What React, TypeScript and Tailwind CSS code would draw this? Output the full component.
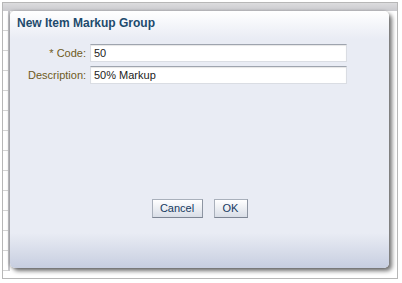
const rows = Array.from({ length: 13 });

export default function App() {
  return (
    <div
      className="w-[402px] h-[283px] bg-white pt-[2px] pl-[2px]"
      style={{ fontFamily: '"Liberation Sans", Arial, sans-serif' }}
    >
      <div className="relative w-[396px] h-[277px] border border-[#b7b7b7] bg-white overflow-hidden">
        {/* page behind the popup */}
        <div className="h-[8px] bg-gradient-to-b from-[#dcdcde] to-[#cacace]" />
        <div className="w-[7px] border-r-[2px] border-[#c8c8cc]">
          {rows.map((_, i) => (
            <div key={i} className="h-[20px] border-b border-[#d4d4d4]" />
          ))}
        </div>

        {/* popup dialog */}
        <div className="absolute left-[7px] top-[8px] w-[379px] h-[257px] rounded-[5px] bg-[linear-gradient(to_bottom,#ffffff_0px,#e9ecf4_28px,#e9ecf4_222px,#c7cee0_257px)] shadow-[3px_3px_4px_rgba(0,0,0,0.55),-1px_0_3px_rgba(0,0,0,0.25)]">
          <div className="pl-[7px] pt-[4px] text-[12px] leading-[16px] font-bold text-[#1d4a6c]">
            New Item Markup Group
          </div>

          <div className="mt-[13px] ml-[18px] grid grid-cols-[58px_257px] gap-x-[4px] gap-y-[4px] text-[11px] leading-[18px]">
            <label className="text-right text-[#6f5b1c] whitespace-nowrap">* Code:</label>
            <div className="h-[18px] bg-white border border-[#dadde3] border-t-[#9ea4ae] shadow-[inset_0_1px_1px_rgba(0,0,0,0.1)] pl-[3px] leading-[16px] text-[#222]">
              50
            </div>
            <label className="text-right text-[#6f5b1c] whitespace-nowrap">Description:</label>
            <div className="h-[18px] bg-white border border-[#dadde3] border-t-[#9ea4ae] shadow-[inset_0_1px_1px_rgba(0,0,0,0.1)] pl-[3px] leading-[16px] text-[#222]">
              50% Markup
            </div>
          </div>

          <div className="mt-[115px] flex justify-center gap-[11px] text-[11px] text-[#163a5f]">
            <button className="w-[51px] h-[19px] border border-[#a9b0bb] border-b-[#7d8593] border-r-[#8d95a2] bg-gradient-to-b from-white to-[#d9dee7] leading-[17px]">
              Cancel
            </button>
            <button className="w-[34px] h-[19px] border border-[#a9b0bb] border-b-[#7d8593] border-r-[#8d95a2] bg-gradient-to-b from-white to-[#d9dee7] leading-[17px]">
              OK
            </button>
          </div>
        </div>
      </div>
    </div>
  );
}
